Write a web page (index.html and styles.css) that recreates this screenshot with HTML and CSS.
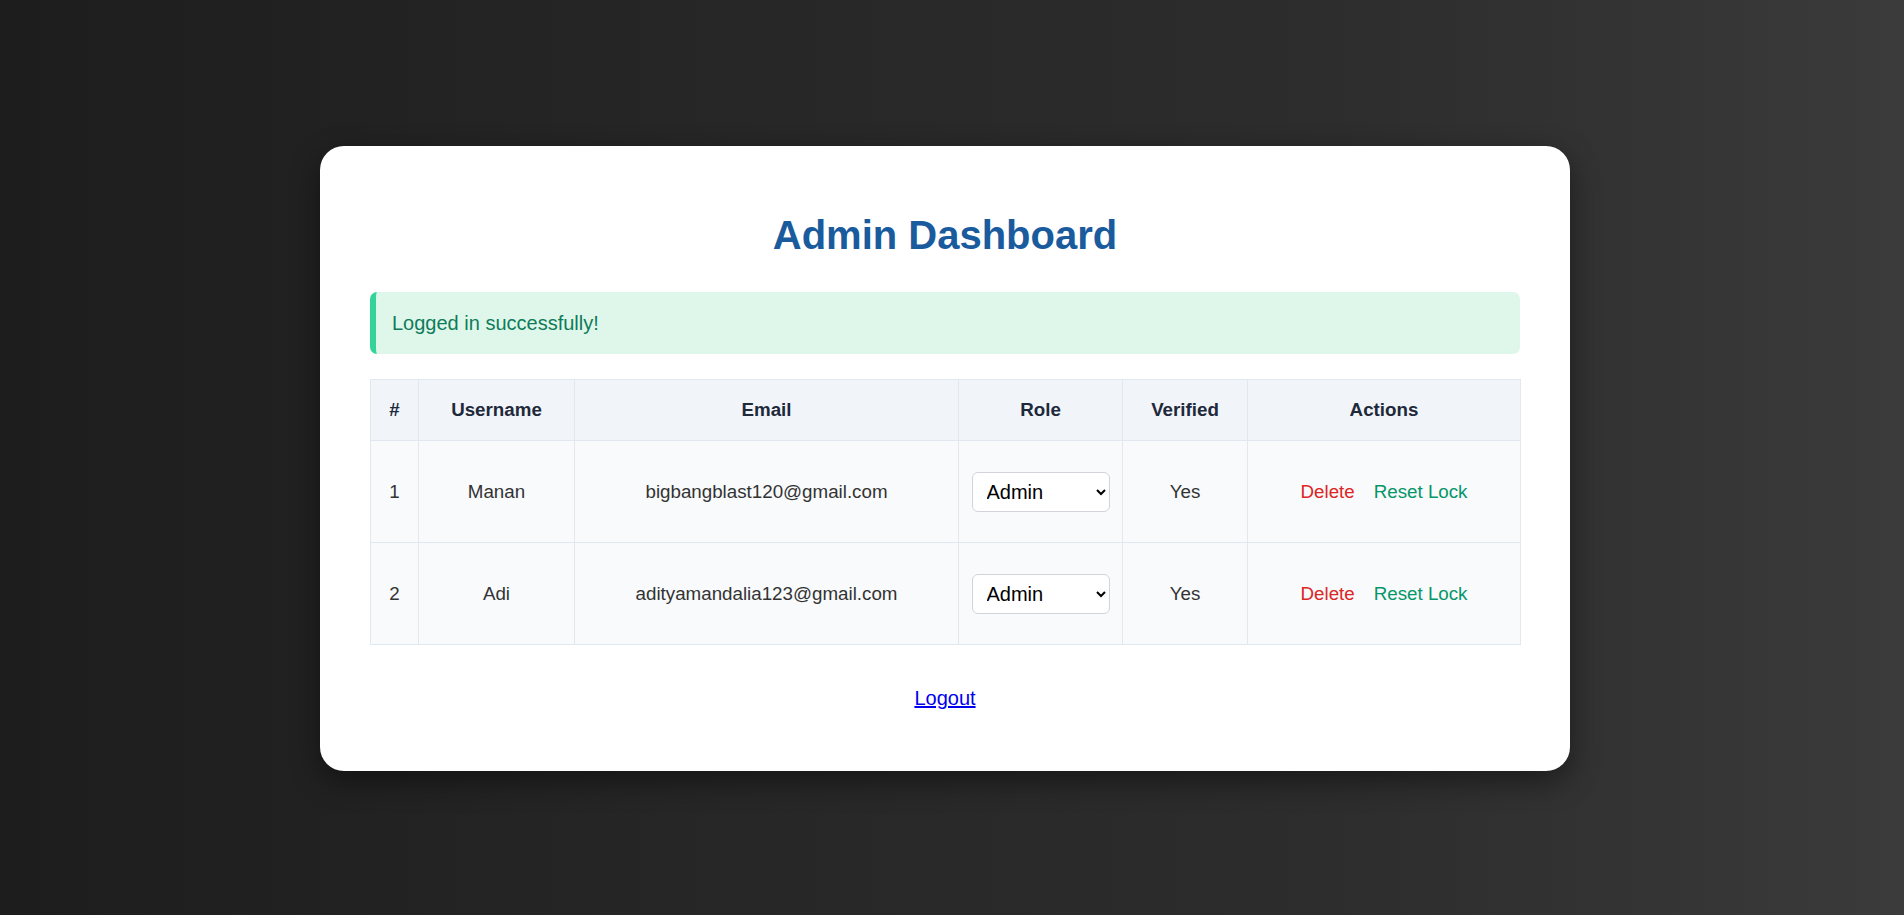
FILE: index.html
```html
<!DOCTYPE html>
<html lang="en">
<head>
<meta charset="utf-8">
<title>Admin Dashboard</title>
<link rel="stylesheet" href="styles.css">
</head>
<body>
<div class="card">
  <h1 class="title">Admin Dashboard</h1>
  <div class="alert">Logged in successfully!</div>
  <table class="users">
    <colgroup>
      <col class="c-num"><col class="c-user"><col class="c-email"><col class="c-role"><col class="c-ver"><col class="c-act">
    </colgroup>
    <thead>
      <tr><th>#</th><th>Username</th><th>Email</th><th>Role</th><th>Verified</th><th>Actions</th></tr>
    </thead>
    <tbody>
      <tr>
        <td>1</td><td>Manan</td><td>bigbangblast120@gmail.com</td>
        <td><select class="role"><option>Admin</option><option>User</option></select></td>
        <td>Yes</td>
        <td><div class="actions"><button class="btn del">Delete</button><button class="btn reset">Reset Lock</button></div></td>
      </tr>
      <tr>
        <td>2</td><td>Adi</td><td>adityamandalia123@gmail.com</td>
        <td><select class="role"><option>Admin</option><option>User</option></select></td>
        <td>Yes</td>
        <td><div class="actions"><button class="btn del">Delete</button><button class="btn reset">Reset Lock</button></div></td>
      </tr>
    </tbody>
  </table>
  <div class="logout"><a href="#">Logout</a></div>
</div>
</body>
</html>
```

FILE: styles.css
```css
html, body { height: 100%; }
body {
  margin: 0;
  padding: 2px 14px 0 0;
  box-sizing: border-box;
  min-height: 100vh;
  display: flex;
  align-items: center;
  justify-content: center;
  font-family: Arial, "Liberation Sans", sans-serif;
  background: linear-gradient(to right, #1d1d1d 0%, #262626 35%, #2d2d2d 70%, #333333 85%, #3b3b3b 100%);
}
.card {
  width: 1250px;
  box-sizing: border-box;
  background: #ffffff;
  border-radius: 24px;
  padding: 50px;
  box-shadow: 0 10px 30px rgba(0, 0, 0, 0.45);
}
.title {
  margin: 16px 0 34px;
  text-align: center;
  font-size: 40px;
  line-height: 46px;
  font-weight: bold;
  color: #1a5b9e;
}
.alert {
  background: #dff7ea;
  border-left: 6px solid #34d399;
  border-radius: 7px;
  padding: 19.5px 16px;
  font-size: 20px;
  line-height: 23px;
  color: #0f7b5b;
  margin-bottom: 25px;
}
.users {
  width: 100%;
  table-layout: fixed;
  border-collapse: collapse;
  font-size: 18.75px;
}
.c-num { width: 48px; }
.c-user { width: 156px; }
.c-email { width: 384px; }
.c-role { width: 164px; }
.c-ver { width: 125px; }
.c-act { width: 273px; }
.users th, .users td {
  border: 1px solid #e2e8f0;
  text-align: center;
  vertical-align: middle;
  line-height: 22px;
}
.users th {
  background: #f1f5f9;
  color: #1e293b;
  font-weight: bold;
  padding: 19px 10px;
}
.users td {
  background: #f8fafc;
  color: #333333;
  padding: 30.5px 12px;
}
.role {
  width: 138px;
  height: 40px;
  box-sizing: border-box;
  font-family: Arial, "Liberation Sans", sans-serif;
  font-size: 20px;
  padding: 0 8px 0 10px;
  border: 1px solid #d1d5db;
  border-radius: 6px;
  background: #ffffff;
  color: #000000;
  display: block;
  margin: 0 auto;
}
.actions {
  display: flex;
  justify-content: center;
  gap: 19px;
}
.btn {
  background: none;
  border: none;
  padding: 0;
  font-family: Arial, "Liberation Sans", sans-serif;
  font-size: 18.75px;
  line-height: 22px;
  cursor: pointer;
}
.del { color: #dc2626; }
.reset { color: #059669; }
.logout {
  text-align: center;
  margin: 42px 0 11px;
  font-size: 20px;
  line-height: 23px;
}
.logout a { color: #0000ee; text-decoration: underline; }
```
